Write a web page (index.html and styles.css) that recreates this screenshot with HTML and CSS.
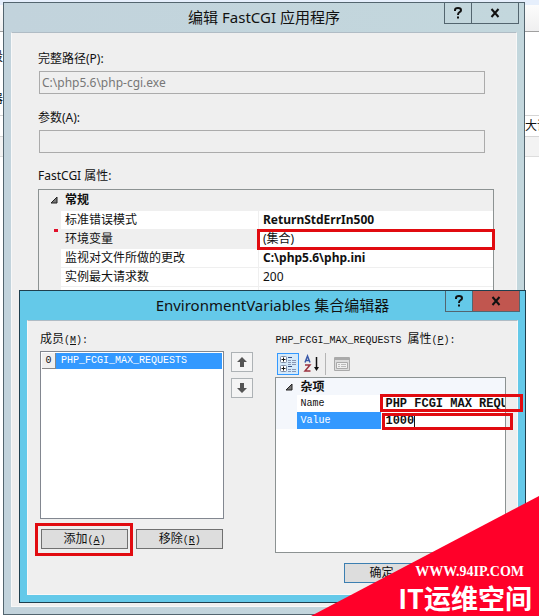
FILE: index.html
```html
<!DOCTYPE html>
<html lang="zh-CN">
  <head>
    <meta charset="UTF-8" />
    <meta name="viewport" content="width=device-width, initial-scale=1.0" />
    <title>编辑 FastCGI 应用程序</title>
    <link rel="stylesheet" href="styles.css">
  </head>
  <body>
    <!-- IIS manager behind the dialogs -->
    <div class="backdrop">
      <div class="backdrop-toolbar"></div>
      <div class="backdrop-head"><span>段</span><span>器</span></div>
      <div class="backdrop-columns">大请</div>
      <div class="backdrop-group"></div>
    </div>

    <!-- FastCGI dialog -->
    <section class="window fastcgi">
      <header class="titlebar">
        <h1>编辑 FastCGI 应用程序</h1>
        <div class="caption-buttons">
          <button class="help-btn" aria-label="帮助">
            <svg width="10" height="12" viewBox="0 0 10 12"><path d="M2 4V3q0-2 3-2t3 2.200q0 1.300-1.500 2T5 8M5 9.500v2" /></svg>
          </button>
          <button class="close-btn" aria-label="关闭">
            <svg width="10" height="10" viewBox="0 0 10 10"><path d="M1.500 1l7 8M8.500 1l-7 8" /></svg>
          </button>
        </div>
      </header>

      <div class="window-body">
        <div class="field">
          <label for="fullPath">完整路径(P):</label>
          <input type="text" id="fullPath" value="C:\php5.6\php-cgi.exe" disabled />
        </div>
        <div class="field">
          <label for="arguments">参数(A):</label>
          <input type="text" id="arguments" disabled />
        </div>

        <h2>FastCGI 属性:</h2>
        <table class="props">
          <colgroup>
            <col class="gutter" />
            <col class="name" />
            <col />
          </colgroup>
          <tr class="category">
            <td><svg width="8" height="8" viewBox="0 0 8 8"><path d="M7 1v6H1z" /></svg></td>
            <th colspan="2">常规</th>
          </tr>
          <tr>
            <td></td>
            <td>标准错误模式</td>
            <td><b>ReturnStdErrIn500</b></td>
          </tr>
          <tr class="selected">
            <td><i class="red-dot"></i></td>
            <td>环境变量</td>
            <td>(集合)<i class="mark"></i></td>
          </tr>
          <tr>
            <td></td>
            <td>监视对文件所做的更改</td>
            <td><b>C:\php5.6\php.ini</b></td>
          </tr>
          <tr>
            <td></td>
            <td>实例最大请求数</td>
            <td>200</td>
          </tr>
          <tr>
            <td></td>
            <td></td>
            <td></td>
          </tr>
        </table>
      </div>
    </section>

    <!-- Collection editor -->
    <section class="window editor">
      <header class="titlebar">
        <h1>EnvironmentVariables 集合编辑器</h1>
        <div class="caption-buttons">
          <button class="help-btn" aria-label="帮助">
            <svg width="10" height="12" viewBox="0 0 10 12"><path d="M2 4V3q0-2 3-2t3 2.200q0 1.300-1.500 2T5 8M5 9.500v2" /></svg>
          </button>
          <button class="close-btn" aria-label="关闭">
            <svg width="10" height="10" viewBox="0 0 10 10"><path d="M1.500 1l7 8M8.500 1l-7 8" /></svg>
          </button>
        </div>
      </header>

      <div class="window-body">
        <div class="columns">
          <div class="members">
            <h2>成员<span class="mono">(<u>M</u>):</span></h2>
            <ul class="member-list">
              <li><span class="index">0</span><span class="item">PHP_FCGI_MAX_REQUESTS</span></li>
            </ul>
            <div class="member-actions">
              <div class="action">
                <button>添加<span class="mono">(<u>A</u>)</span></button>
                <i class="mark"></i>
              </div>
              <div class="action">
                <button>移除<span class="mono">(<u>R</u>)</span></button>
              </div>
            </div>
          </div>

          <div class="order">
            <button aria-label="上移">
              <svg width="12" height="12" viewBox="0 0 12 12"><path d="M6 1l5 5H8v5H4V6H1z" /></svg>
            </button>
            <button aria-label="下移">
              <svg width="12" height="12" viewBox="0 0 12 12"><path d="M6 11l5-5H8V1H4v5H1z" /></svg>
            </button>
          </div>

          <div class="panel">
            <h2><span class="mono">PHP_FCGI_MAX_REQUESTS </span>属性<span class="mono">(<u>P</u>):</span></h2>
            <div class="toolbar">
              <button class="active" aria-label="按分类顺序">
                <svg width="20" height="20" viewBox="0 0 20 20">
                  <rect x="2.500" y="2.500" width="6" height="6" rx="1" fill="#fff" stroke="#7d8ba5" />
                  <rect x="2.500" y="11.500" width="6" height="6" rx="1" fill="#fff" stroke="#7d8ba5" />
                  <path d="M3.500 5.500h4M5.500 3.500v4M3.500 14.500h4M5.500 12.500v4" stroke="#111" />
                  <path d="M10 3.500h4M10 12.500h4" stroke="#344f84" />
                  <path d="M10 6.500h3M14 6.500h4M10 8.500h3M14 8.500h4M10 10.500h3M14 10.500h4M10 15.500h3M14 15.500h4M10 17.500h3M14 17.500h4" stroke="#8795b4" />
                </svg>
              </button>
              <button aria-label="字母顺序">
                <svg width="20" height="20" viewBox="0 0 20 20">
                  <path d="M3 8.500L5.500 2 8 8.500M4 6.500h3" fill="none" stroke="#3b59a8" stroke-width="1.500" />
                  <path d="M3 11h5l-5 6h5.500" fill="none" stroke="#9c3340" stroke-width="1.500" />
                  <path d="M14.500 3v12" stroke="#111" stroke-width="1.500" />
                  <path d="M12 13h5l-2.500 4z" fill="#111" />
                </svg>
              </button>
              <span class="separator"></span>
              <button aria-label="属性页" disabled>
                <svg width="18" height="18" viewBox="0 0 18 18">
                  <path d="M1.500 2.500h15v13h-15z" fill="#ddd" stroke="#aaa" />
                  <path d="M2 4h14" stroke="#aaa" stroke-width="2" />
                  <path d="M3.500 7.500h11v6h-11z" fill="#f0f0f0" stroke="#aaa" />
                  <path d="M5 9.500h2M8 9.500h5M5 11.500h2M8 11.500h5" stroke="#bbb" />
                </svg>
              </button>
            </div>

            <div class="grid-box">
              <table class="props">
                <colgroup>
                  <col class="gutter" />
                  <col class="name" />
                  <col />
                </colgroup>
                <tr class="category">
                  <td><svg width="8" height="8" viewBox="0 0 8 8"><path d="M7 1v6H1z" /></svg></td>
                  <th colspan="2">杂项</th>
                </tr>
                <tr>
                  <td></td>
                  <td class="mono">Name</td>
                  <td><div class="value">PHP FCGI MAX REQU</div><i class="mark name-mark"></i></td>
                </tr>
                <tr class="selected">
                  <td></td>
                  <td class="mono"><label for="propValue">Value</label></td>
                  <td><input type="text" class="value" id="propValue" value="1000" /><i class="mark value-mark"></i></td>
                </tr>
              </table>
            </div>

            <div class="dialog-actions">
              <button>确定</button>
            </div>
          </div>
        </div>
      </div>
    </section>

    <div class="watermark">
      <span class="site">WWW.94IP.COM</span>
      <span class="brand">IT运维空间</span>
    </div>
  </body>
</html>
```

FILE: styles.css
```css
* {
  margin: 0;
  padding: 0;
  box-sizing: border-box;
}

body {
  position: relative;
  min-height: 100vh;
  overflow: hidden;
  background: white;
  color: #111;
  font-family: "Noto Sans", "Noto Sans CJK SC", sans-serif;
  font-size: 12px;
}

button,
input {
  font: inherit;
  color: inherit;
}

h1,
h2 {
  font-weight: normal;
}

svg {
  display: block;
}

/* Page behind the dialogs */
.backdrop-toolbar {
  height: 32px;
  border-top: 5px solid #e6effc;
  border-bottom: 1px solid #a0a0a0;
  background: linear-gradient(#fcfcfc, #efeff0);
}

.backdrop-head {
  display: flex;
  flex-direction: column;
  align-items: flex-start;
  gap: 24px;
  height: 83px;
  padding-top: 16px;
  line-height: 18px;
}

.backdrop-head span {
  margin-left: -9px;
}

.backdrop-columns {
  height: 22px;
  border-top: 1px solid #d5d5d5;
  border-bottom: 1px solid #d5d5d5;
  line-height: 20px;
  text-align: right;
  margin-right: -10px;
}

.backdrop-group {
  height: 20px;
  border-bottom: 1px solid #ddd;
  background: #f3f3f3;
}

/* Windows */
.window {
  position: absolute;
  display: flex;
  flex-direction: column;
  padding: 0 7px 7px;
}

.fastcgi {
  top: 2px;
  right: 14px;
  bottom: 1px;
  left: 3px;
  border: 1px solid #53656f;
  background: linear-gradient(to right, #c2d3dc, #c3d7dd);
}

.editor {
  top: 290px;
  right: 13px;
  left: 19px;
  border: 1px solid #1f3f4e;
  background: #64c9e9;
}

.titlebar {
  position: relative;
  height: 29px;
}

.titlebar h1 {
  font-size: 15px;
  line-height: 28px;
  text-align: center;
}

.caption-buttons {
  position: absolute;
  top: 0;
  right: -2px;
  display: flex;
}

.caption-buttons button {
  display: flex;
  align-items: center;
  justify-content: center;
  width: 28px;
  height: 21px;
  border: 1px solid #53656f;
  border-top: none;
  background: transparent;
}

.caption-buttons .close-btn {
  width: 47px;
  border-left: none;
}

.caption-buttons path {
  fill: none;
  stroke: #111;
  stroke-width: 2;
}

.editor .caption-buttons .close-btn {
  background: #c1564f;
}

.window-body {
  flex: 1;
  border: 1px solid #f8f8f8;
  border-top-color: #b0bcc5;
  background: #efefef;
}

.fastcgi .window-body {
  padding: 17px 22px 0 26px;
}

.fastcgi h2,
.field label {
  display: block;
  font-size: 12px;
  line-height: 18px;
}

.field {
  margin: 0 9px 14px 1px;
}

.field label {
  margin-left: -1px;
}

.field input {
  display: block;
  width: 100%;
  height: 23px;
  margin-top: 3px;
  padding: 0 2px;
  border: 1px solid #ababab;
  background: #efefef;
  color: #777;
}

.field + .field {
  padding-top: 1px;
}

/* Property grids */
.props {
  width: 100%;
  border-collapse: separate;
  border-spacing: 0;
  table-layout: fixed;
  background: white;
}

.fastcgi .props {
  margin-top: 4px;
  border: 1px solid #8c9292;
}

.props td,
.props th {
  position: relative;
  height: 19px;
  line-height: 18px;
  padding-left: 4px;
  border: solid #efefef;
  border-width: 0 0 1px 1px;
  text-align: left;
  white-space: nowrap;
}

.fastcgi .category td,
.fastcgi .category th {
  height: 21px;
}

.props .gutter {
  width: 21px;
}

.fastcgi .props .name {
  width: 198px;
}

.props td:first-child,
.props .category th {
  border-color: #efefef;
  background: #efefef;
}

.props td:first-child {
  padding-left: 10px;
}

.category svg {
  fill: #777;
  stroke: #222;
}

.fastcgi .selected td:nth-child(2) {
  background: #efefef;
}

/* Red highlights */
.mark {
  position: absolute;
  inset: -1px -2px;
  border: 3px solid #e10b10;
  z-index: 1;
  pointer-events: none;
}

.fastcgi .mark {
  bottom: -2px;
}

.red-dot {
  position: absolute;
  top: -1px;
  right: 2px;
  width: 4px;
  height: 3px;
  background: #e1102a;
}

/* Collection editor */
.editor h2,
.mono,
.member-list {
  font-size: 12px;
  line-height: 18px;
  white-space: nowrap;
}

.mono,
.editor h2 .mono,
.member-list .item {
  font-family: "Liberation Mono", monospace;
  font-size: 10px;
}

.editor .window-body {
  padding: 9px 11px 11px 12px;
}

.columns {
  display: flex;
}

.members {
  flex: 4 1 0;
  min-width: 0;
}

.member-list {
  height: 168px;
  margin-top: 3px;
  padding: 1px;
  border: 1px solid #828790;
  background: white;
  list-style: none;
}

.member-list li {
  display: flex;
  height: 16px;
  line-height: 15px;
}

.index {
  width: 14px;
  border: solid #888;
  border-width: 0 1px 1px 0;
  background: #f0f0f0;
  font-family: "Liberation Mono", monospace;
  font-size: 10px;
  text-align: center;
}

.item {
  flex: 1;
  padding-left: 5px;
  background: #3399ff;
  color: white;
}

.editor h2 {
  height: 18px;
}

.member-actions {
  display: flex;
  gap: 8px;
  margin-top: 10px;
  padding: 0 1px;
}

.action {
  position: relative;
  flex: 1;
}

.action .mark {
  inset: -6px -5px -7px -6px;
}

.action button,
.dialog-actions button {
  display: block;
  width: 100%;
  height: 20px;
  border: 1px solid #707070;
  background: #dddddd;
  line-height: 18px;
}

.order {
  display: flex;
  flex-direction: column;
  gap: 6px;
  margin: 22px 22px 0 7px;
}

.order button {
  display: flex;
  align-items: center;
  justify-content: center;
  width: 22px;
  height: 20px;
  border: 1px solid #adb2b5;
  background: #f4f4f4;
}

.order svg {
  fill: #555;
}

.panel {
  flex: 5 1 0;
  min-width: 0;
}

.toolbar {
  display: flex;
  align-items: center;
  gap: 2px;
  height: 22px;
  margin: 5px 0 2px 2px;
}

.toolbar button {
  width: 22px;
  height: 22px;
  border: 1px solid transparent;
  background: none;
}

.toolbar .active {
  border-color: #3399ff;
  background: #d4e9fa;
}

.separator {
  width: 1px;
  height: 22px;
  margin-right: 4px;
  background: #b5b5b5;
}

.grid-box {
  height: 176px;
  border: 1px solid #8c9292;
  background: white;
}

.editor .props td,
.editor .props th {
  height: 17px;
  line-height: 16px;
  border: none;
}

.editor .props td {
  padding-left: 3px;
}

.editor .props td:first-child {
  padding-left: 9px;
}

.editor .props td:last-child {
  padding-left: 4px;
}

.editor .props th {
  padding-left: 3px;
}

.editor .props .name {
  width: 84px;
}

.editor .props td:first-child,
.editor .props .category th {
  background: #f4f7fc;
}

.editor .selected td:nth-child(2) {
  background: #3399ff;
  color: white;
}

.value {
  display: block;
  overflow: hidden;
  height: 14px;
  line-height: 14px;
  font-family: "Liberation Mono", monospace;
  font-size: 12px;
  font-weight: bold;
}

/* Right border stands for the text cursor */
input.value {
  width: 30px;
  border: none;
  border-right: 1px solid #111;
  outline: none;
}

.name-mark {
  inset: -1px -18px 0 -1px;
}

.value-mark {
  inset: 1px -8px -1px 1px;
}

.dialog-actions {
  margin: 10px 0 0 69px;
}

.dialog-actions button {
  width: 74px;
  border-color: #3c7fb1;
}

/* Corner watermark */
.watermark {
  position: absolute;
  right: 0;
  bottom: 0;
  z-index: 2;
  display: flex;
  flex-direction: column;
  align-items: flex-end;
  justify-content: flex-end;
  width: 228px;
  height: 120px;
  padding-right: 7px;
  background: #ff0029;
  clip-path: polygon(0 100%, 100% 0, 100% 100%);
  color: white;
  font-weight: bold;
  white-space: nowrap;
}

.site {
  margin-right: 8px;
  font-family: "Liberation Serif", serif;
  font-size: 14px;
  line-height: 16px;
}

.brand {
  font-family: "Noto Sans CJK SC", sans-serif;
  font-size: 27px;
  line-height: 36px;
}
```
